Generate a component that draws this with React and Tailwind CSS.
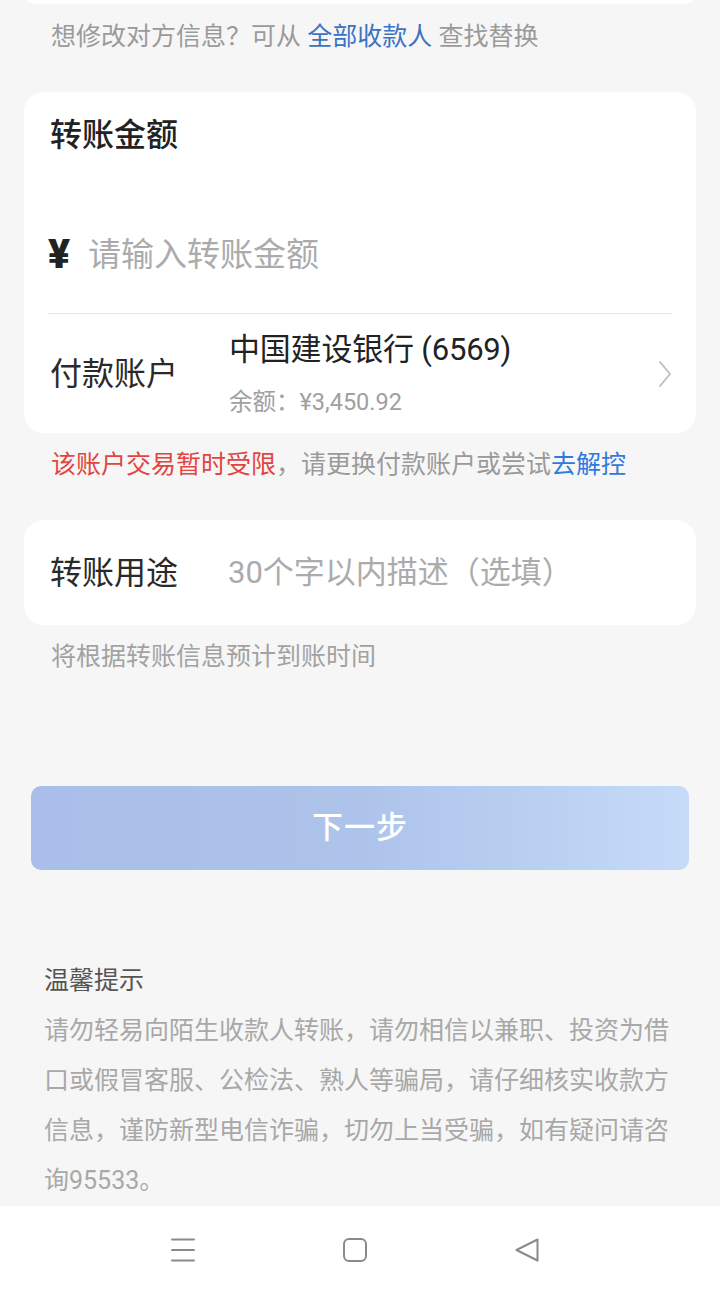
import React from "react";

const font = { fontFamily: 'Roboto, "Noto Sans CJK SC", "Noto Sans", sans-serif' };

export default function App() {
  return (
    <div
      className="w-[720px] h-[1293px] bg-[#f6f6f6] overflow-hidden flex flex-col"
      style={font}
    >
      {/* top card sliver */}
      <div className="mx-[24px] -mt-[20px] h-[24px] rounded-[20px] bg-white shrink-0" />

      <div className="mt-[15px] pl-[51px] h-[36px] leading-[36px] text-[25px] text-[#9a9a9a] whitespace-nowrap">
        想修改对方信息？可从 <span className="text-[#3b73c4]">全部收款人</span> 查找替换
      </div>

      {/* amount card */}
      <div className="mt-[37px] mx-[24px] h-[341px] rounded-[20px] bg-white flex flex-col shrink-0">
        <div className="pt-[23px] pl-[26px] h-[63px] leading-[40px] text-[32px] font-medium text-[#222]">
          转账金额
        </div>
        <div className="mt-[69px] h-[60px] pl-[24px] flex items-center">
          <span className="text-[41px] font-black text-[#222] leading-none w-[40px]">¥</span>
          <span className="text-[33px] text-[#ababab] leading-none">请输入转账金额</span>
        </div>
        <div className="mt-[29px] mx-[24px] h-px bg-[#e6e6e6]" />
        <div className="h-[119px] flex items-center pl-[26px] pr-[24px]">
          <div className="w-[179px] text-[32px] text-[#2a2a2a] leading-[40px]">付款账户</div>
          <div className="flex-1 flex flex-col">
            <div className="h-[40px] leading-[40px] text-[31px] text-[#222] tracking-[-0.2px]">中国建设银行 (6569)</div>
            <div className="mt-[17px] h-[30px] leading-[30px] text-[23.5px] text-[#a0a0a0]">余额：¥3,450.92</div>
          </div>
          <svg width="14" height="28" viewBox="0 0 14 28" className="shrink-0">
            <path d="M2 2 L12 14 L2 26" fill="none" stroke="#bdbdbd" strokeWidth="1.8" strokeLinecap="round" strokeLinejoin="round" />
          </svg>
        </div>
      </div>

      <div className="mt-[14px] pl-[51px] h-[36px] leading-[36px] text-[25px] text-[#9a9a9a] whitespace-nowrap">
        <span className="text-[#e3443f]">该账户交易暂时受限</span>，请更换付款账户或尝试
        <span className="text-[#2f7ae0]">去解控</span>
      </div>

      {/* purpose card */}
      <div className="mt-[37px] mx-[24px] h-[105px] rounded-[20px] bg-white flex items-center pl-[26px] shrink-0">
        <div className="w-[178px] text-[32px] text-[#2a2a2a] leading-[40px]">转账用途</div>
        <div className="text-[31px] text-[#ababab] leading-[40px]">30个字以内描述（选填）</div>
      </div>

      <div className="mt-[14px] pl-[51px] h-[36px] leading-[36px] text-[25px] text-[#a2a2a2]">
        将根据转账信息预计到账时间
      </div>

      <div className="mt-[111px] mx-[31px] h-[84px] rounded-[10px] bg-linear-to-r from-[#a9bee8] via-[#adc3ea] to-[#c5dbf8] flex items-center justify-center shrink-0">
        <span className="text-[31px] font-medium text-white tracking-[1px]">下一步</span>
      </div>

      <div className="mt-[93px] px-[44px] h-[36px] leading-[36px] text-[25px] text-[#555]">温馨提示</div>
      <div className="mt-[7px] px-[44px] text-[25px] leading-[50px] text-[#a8a8a8] whitespace-nowrap">
        <div>请勿轻易向陌生收款人转账，请勿相信以兼职、投资为借</div>
        <div>口或假冒客服、公检法、熟人等骗局，请仔细核实收款方</div>
        <div>信息，谨防新型电信诈骗，切勿上当受骗，如有疑问请咨</div>
        <div>询95533。</div>
      </div>

      {/* nav bar */}
      <div className="mt-auto h-[88px] bg-white flex items-center pl-[171px] gap-[148px] shrink-0">
        <svg width="24" height="24" viewBox="0 0 24 24">
          <path d="M1 1.5 H23 M1 12 H23 M1 22.5 H23" stroke="#8a8a8a" strokeWidth="2" strokeLinecap="round" />
        </svg>
        <svg width="24" height="24" viewBox="0 0 24 24">
          <rect x="1" y="1" width="22" height="22" rx="5" fill="none" stroke="#8a8a8a" strokeWidth="2" />
        </svg>
        <svg width="24" height="24" viewBox="0 0 24 24">
          <path d="M22.5 1.5 L1.5 12 L22.5 22.5 Z" fill="none" stroke="#8a8a8a" strokeWidth="2" strokeLinejoin="round" />
        </svg>
      </div>
    </div>
  );
}
